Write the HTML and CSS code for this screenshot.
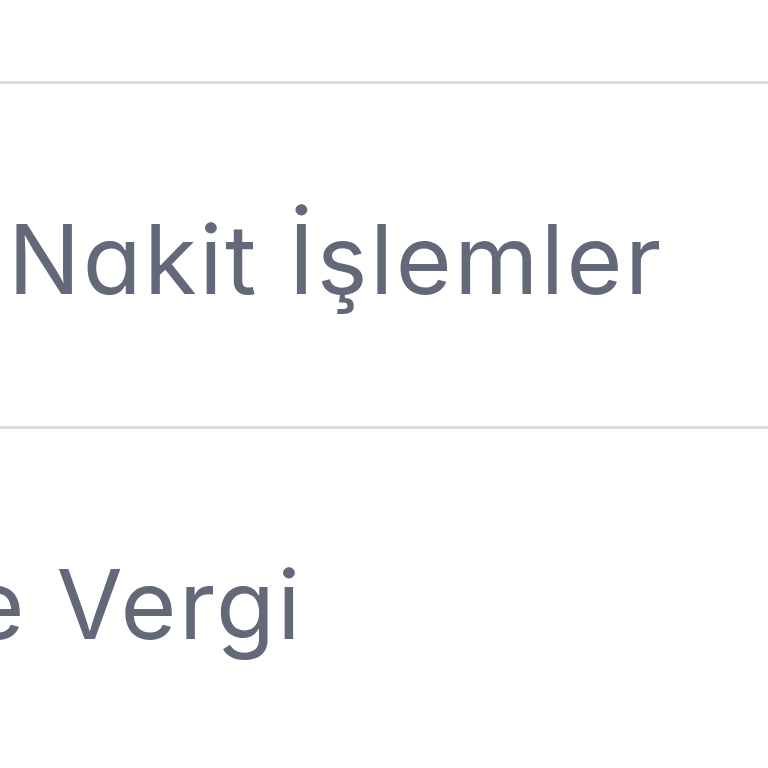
FILE: index.html
```html
<!DOCTYPE html>
<html lang="tr">
<head>
<meta charset="utf-8">
<link rel="stylesheet" href="styles.css">
</head>
<body>
<ul class="menu">
  <li class="menu-item menu-item--top"></li>
  <li class="menu-item"><span class="label">Nakit İşlemler</span></li>
  <li class="menu-item menu-item--shift"><span class="label">ve Vergi</span></li>
</ul>
</body>
</html>
```
FILE: styles.css
```css
html, body {
  margin: 0;
  padding: 0;
  background: #ffffff;
  overflow: hidden;
  width: 768px;
  height: 768px;
}
.menu {
  list-style: none;
  margin: 0;
  padding: 0;
  font-family: Inter, "Noto Sans", sans-serif;
  font-feature-settings: "cv11" 1;
  color: #636978;
}
.menu-item {
  display: flex;
  align-items: center;
  height: 342px;
  padding-left: 8px;
  border-bottom: 3px solid #dedede;
  white-space: nowrap;
}
.menu-item--top {
  height: 81px;
}
.menu-item--shift {
  padding-left: 0;
  border-bottom: none;
}
.menu-item--shift .label {
  margin-left: -86px;
}
.label {
  font-size: 96px;
  font-weight: 400;
  letter-spacing: 2.5px;
  line-height: 1;
  padding-top: 8px;
}
```
